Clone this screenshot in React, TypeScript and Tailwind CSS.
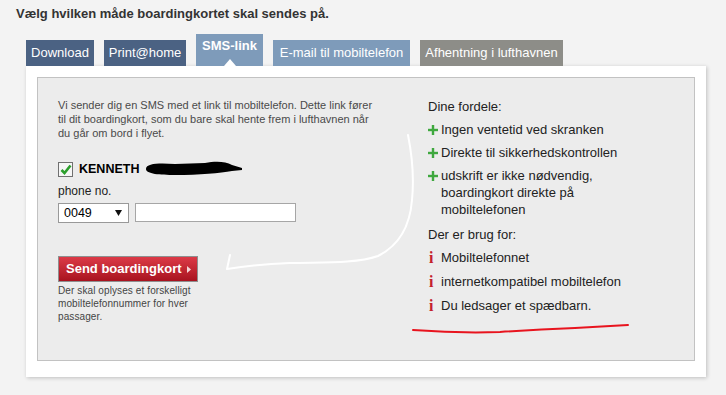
import React from "react";

const tabs = [
  { label: "Download", w: "w-[68px]", bg: "bg-[#4b6283]" },
  { label: "Print@home", w: "w-[82px]", bg: "bg-[#4b6283]" },
  { label: "SMS-link", w: "w-[67px]", bg: "bg-[#7e9bba]", active: true },
  { label: "E-mail til mobiltelefon", w: "w-[137px]", bg: "bg-[#7e9bba]" },
  { label: "Afhentning i lufthavnen", w: "w-[143px]", bg: "bg-[#8d8d88]" }
];

function Plus() {
  return (
    <svg width="10" height="10" viewBox="0 0 10 10" className="mt-[4px] shrink-0">
      <rect x="0" y="3.8" width="10" height="2.4" fill="#3fa83f" />
      <rect x="3.8" y="0" width="2.4" height="10" fill="#3fa83f" />
    </svg>
  );
}

function Info() {
  return (
    <span className="w-[13px] shrink-0 pl-[1px] font-['Liberation_Serif',serif] text-[16px] font-bold leading-[17px] text-[#c4202c]">
      i
    </span>
  );
}

export default function App() {
  return (
    <div className="relative h-[395px] w-[726px] overflow-hidden bg-[#f3f3f3] font-['Liberation_Sans',Arial,sans-serif]">
      <h1 className="pl-[16px] pt-[6px] text-[13px] font-bold leading-[16px] text-[#333]">
        Vælg hvilken måde boardingkortet skal sendes på.
      </h1>

      <div className="ml-[26px] mt-[12px] flex items-end gap-[10px]">
        {tabs.map((t) =>
          t.active ? (
            <div
              key={t.label}
              className={`relative h-[32px] ${t.w} ${t.bg} pt-[4px] text-center text-[13px] font-bold leading-[16px] text-white`}
            >
              {t.label}
              <span className="absolute bottom-0 left-1/2 h-0 w-0 -translate-x-1/2 border-x-[6px] border-b-[7px] border-x-transparent border-b-white" />
            </div>
          ) : (
            <div
              key={t.label}
              className={`flex h-[26px] ${t.w} ${t.bg} items-center justify-center text-[13px] leading-[16px] text-white`}
            >
              {t.label}
            </div>
          )
        )}
      </div>

      <div className="ml-[26px] h-[311px] w-[680px] bg-white p-[11px] shadow-[1px_1px_4px_rgba(0,0,0,0.22)]">
        <div className="flex h-[284px] border border-[#c2c2c2] bg-[#ececec] pl-[20px] pt-[20px]">
          <div className="w-[370px]">
            <p className="whitespace-nowrap text-[11px] leading-[14px] text-[#4a4a4a]">
              Vi sender dig en SMS med et link til mobiltelefon. Dette link fører
              <br />
              til dit boardingkort, som du bare skal hente frem i lufthavnen når
              <br />
              du går om bord i flyet.
            </p>

            <div className="mt-[21px] flex h-[16px] items-center gap-[6px]">
              <span className="flex h-[15px] w-[15px] items-center justify-center border border-[#707070] bg-[#f6f6f6]">
                <svg width="12" height="11" viewBox="0 0 12 11">
                  <path d="M1.5 6 L4.5 9 L10.5 1.5" fill="none" stroke="#2c9f2c" strokeWidth="2.6" />
                </svg>
              </span>
              <span className="text-[12.5px] font-bold text-black">KENNETH</span>
            </div>

            <div className="mt-[7px] text-[12px] leading-[14px] text-[#222]">phone no.</div>

            <div className="mt-[5px] flex items-start gap-[6px]">
              <div className="flex h-[20px] w-[71px] items-center justify-between border border-[#999] bg-white pl-[5px] pr-[6px] text-[12.5px] text-black">
                <span>0049</span>
                <svg width="7" height="6" viewBox="0 0 7 6">
                  <path d="M0 0 H7 L3.5 6 Z" fill="#111" />
                </svg>
              </div>
              <div className="h-[19px] w-[161px] border border-[#a6a6a6] bg-white" />
            </div>

            <button
              type="button"
              className="mt-[33px] flex h-[26px] w-[140px] items-center gap-[5px] border border-[#8f8f8f] bg-gradient-to-b from-[#dc3a47] to-[#a8121f] pl-[7px] text-[13px] font-bold text-white"
            >
              Send boardingkort
              <svg width="4" height="7" viewBox="0 0 4 7" className="mt-[1px]">
                <path d="M0 0 L4 3.5 L0 7 Z" fill="#f4d6d8" />
              </svg>
            </button>

            <p className="mt-[2px] text-[10px] leading-[13px] tracking-[0.1px] text-[#444]">
              Der skal oplyses et forskelligt
              <br />
              mobiltelefonnummer for hver
              <br />
              passager.
            </p>
          </div>

          <div className="text-[13px] leading-[17px] text-[#222]">
            <div>Dine fordele:</div>
            <div className="mt-[6px] flex gap-[3px]">
              <Plus />
              <span>Ingen ventetid ved skranken</span>
            </div>
            <div className="mt-[6px] flex gap-[3px]">
              <Plus />
              <span>Direkte til sikkerhedskontrollen</span>
            </div>
            <div className="mt-[6px] flex gap-[3px]">
              <Plus />
              <span className="w-[180px]">udskrift er ikke nødvendig, boardingkort direkte på mobiltelefonen</span>
            </div>
            <div className="mt-[8px]">Der er brug for:</div>
            <div className="mt-[6px] flex">
              <Info />
              <span>Mobiltelefonnet</span>
            </div>
            <div className="mt-[7px] flex">
              <Info />
              <span>internetkompatibel mobiltelefon</span>
            </div>
            <div className="mt-[7px] flex">
              <Info />
              <span>Du ledsager et spædbarn.</span>
            </div>
          </div>
        </div>
      </div>

      <svg className="pointer-events-none absolute left-0 top-0" width="726" height="395">
        <path
          d="M146 169 C146 163 160 163 175 164 L205 163 C215 161 225 161 232 165 L242 168 L242 170 L232 171 C220 173 200 175 175 175 C160 175 146 174 146 169 Z"
          fill="#000"
        />
        <path
          d="M408 135 C412 155 414 180 412 200 C410 225 400 245 378 256 C355 264 320 262 290 263 C265 264 245 266 227 269 L230 255"
          fill="none"
          stroke="#fff"
          strokeWidth="2"
          strokeLinecap="round"
          strokeLinejoin="round"
        />
        <path
          d="M413 330 C440 332 470 333 500 332 C530 330 550 329 575 328 C595 327 612 326 628 325"
          fill="none"
          stroke="#e8141e"
          strokeWidth="2"
          strokeLinecap="round"
        />
      </svg>
    </div>
  );
}
